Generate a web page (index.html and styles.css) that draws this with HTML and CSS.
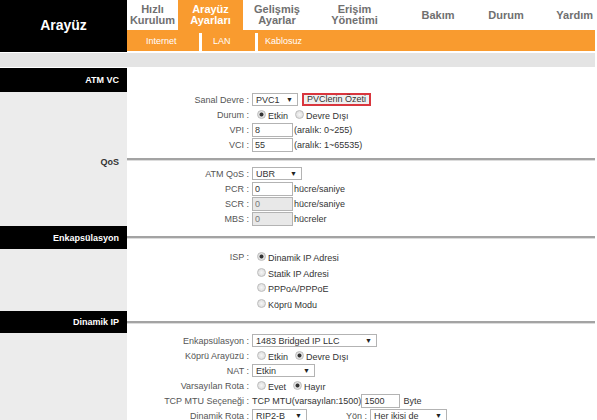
FILE: index.html
```html
<!DOCTYPE html>
<html lang="tr">
<head>
    <meta charset="UTF-8">
    <meta name="viewport" content="width=device-width, initial-scale=1.0">
    <title>Arayüz Ayarları</title>
    <link rel="stylesheet" href="styles.css">
</head>
<body>
    <div class="page">
        <div class="header">
            <div class="logo">Arayüz</div>
            <div class="nav">
                <div class="menu">
                    <div class="tab t1">Hızlı<br>Kurulum</div>
                    <div class="tab t2 active">Arayüz<br>Ayarları</div>
                    <div class="tab t3">Gelişmiş<br>Ayarlar</div>
                    <div class="tab t4">Erişim<br>Yönetimi</div>
                    <div class="tab t5">Bakım</div>
                    <div class="tab t6">Durum</div>
                    <div class="tab t7">Yardım</div>
                </div>
                <div class="submenu">
                    <span class="sub s1">Internet</span>
                    <span class="sub s2">LAN</span>
                    <span class="sub s3">Kablosuz</span>
                </div>
            </div>
        </div>
        <div class="strip"></div>

        <div class="content">
            <div class="sec-head first">
                <div class="sec-title">ATM VC</div>
            </div>
            <div class="row">
                <span class="lbl">Sanal Devre :</span>
                <span class="select w-pvc">PVC1 <i>▼</i></span>
                <span class="btn-red">PVClerin Özeti</span>
            </div>
            <div class="row">
                <span class="lbl">Durum :</span>
                <span class="radio on"></span><span class="opt">Etkin</span>
                <span class="radio"></span><span class="opt">Devre Dışı</span>
            </div>
            <div class="row">
                <span class="lbl">VPI :</span>
                <input class="box" type="text" value="8">
                <span class="note">(aralık: 0~255)</span>
            </div>
            <div class="row">
                <span class="lbl">VCI :</span>
                <input class="box" type="text" value="55">
                <span class="note">(aralık: 1~65535)</span>
            </div>
            <div class="sub-head">
                <div class="sub-title">QoS</div>
                <div class="sec-rule"></div>
            </div>
            <div class="row">
                <span class="lbl">ATM QoS :</span>
                <span class="select w-qos">UBR <i>▼</i></span>
            </div>
            <div class="row">
                <span class="lbl">PCR :</span>
                <input class="box" type="text" value="0">
                <span class="note">hücre/saniye</span>
            </div>
            <div class="row">
                <span class="lbl">SCR :</span>
                <input class="box" type="text" value="0" disabled>
                <span class="note">hücre/saniye</span>
            </div>
            <div class="row">
                <span class="lbl">MBS :</span>
                <input class="box" type="text" value="0" disabled>
                <span class="note">hücreler</span>
            </div>

            <div class="sec-head">
                <div class="sec-title">Enkapsülasyon</div>
                <div class="sec-rule"></div>
            </div>
            <div class="isp">
                <div class="row tall">
                    <span class="lbl">ISP :</span>
                    <span class="radio on"></span><span class="opt">Dinamik IP Adresi</span>
                </div>
                <div class="row tall">
                    <span class="lbl"></span>
                    <span class="radio"></span><span class="opt">Statik IP Adresi</span>
                </div>
                <div class="row tall">
                    <span class="lbl"></span>
                    <span class="radio"></span><span class="opt">PPPoA/PPPoE</span>
                </div>
                <div class="row tall">
                    <span class="lbl"></span>
                    <span class="radio"></span><span class="opt">Köprü Modu</span>
                </div>
            </div>

            <div class="sec-head short">
                <div class="sec-title">Dinamik IP</div>
                <div class="sec-rule"></div>
            </div>
            <div class="row">
                <span class="lbl">Enkapsülasyon :</span>
                <span class="select w-enc">1483 Bridged IP LLC <i>▼</i></span>
            </div>
            <div class="row">
                <span class="lbl">Köprü Arayüzü :</span>
                <span class="radio"></span><span class="opt">Etkin</span>
                <span class="radio on"></span><span class="opt">Devre Dışı</span>
            </div>
            <div class="row">
                <span class="lbl">NAT :</span>
                <span class="select w-nat">Etkin <i>▼</i></span>
            </div>
            <div class="row">
                <span class="lbl">Varsayılan Rota :</span>
                <span class="radio"></span><span class="opt">Evet</span>
                <span class="radio on"></span><span class="opt">Hayır</span>
            </div>
            <div class="row">
                <span class="lbl">TCP MTU Seçeneği :</span>
                <span class="text">TCP MTU(varsayılan:1500)</span>
                <input class="box w-mtu" type="text" value="1500">
                <span class="note byte">Byte</span>
            </div>
            <div class="row">
                <span class="lbl">Dinamik Rota :</span>
                <span class="select w-rip">RIP2-B <i>▼</i></span>
                <span class="yon">Yön :</span>
                <span class="select w-yon">Her ikisi de <i>▼</i></span>
            </div>
        </div>
    </div>
</body>
</html>
```

FILE: styles.css
```css
body {
    margin: 0;
    background-color: #fff;
    font-family: "Liberation Sans", Arial, sans-serif;
    font-size: 9px;
    color: #444;
}

.page {
    width: 595px;
}

/* header */

.header {
    display: flex;
    height: 52px;
}

.logo {
    width: 127px;
    background-color: #000;
    color: #fff;
    font-size: 14px;
    font-weight: bold;
    text-align: center;
    line-height: 50px;
}

.nav {
    flex: 1;
}

.menu {
    display: flex;
    height: 30px;
}

.tab {
    display: flex;
    align-items: center;
    justify-content: center;
    text-align: center;
    font-size: 11px;
    font-weight: bold;
    line-height: 11px;
    color: #707070;
}

.tab.active {
    background-color: #f99b2f;
    color: #fff;
}

.t1 { width: 51px; }
.t2 { width: 65px; }
.t3 { width: 68px; }
.t4 { width: 87px; }
.t5 { width: 80px; }
.t6 { width: 56px; }
.t7 { flex: 1; justify-content: flex-end; padding-right: 2px; }

.submenu {
    display: flex;
    height: 21px;
    background-color: #f99b2f;
}

.sub {
    margin-top: 3px;
    height: 18px;
    line-height: 17px;
    color: #fff;
    font-size: 9px;
    box-sizing: border-box;
}

.s1 { width: 72px; padding-left: 19px; }
.s2 { width: 56px; padding-left: 11px; border-left: 3px solid #fff; }
.s3 { padding-left: 7px; border-left: 3px solid #fff; }

.strip {
    height: 14px;
    margin-top: 1px;
    margin-bottom: 1px;
    background-color: #e4e4e4;
}

/* form area */

.content {
    background: linear-gradient(to right, #ececec 127px, #fff 127px);
    height: 353px;
    overflow: hidden;
}

.sec-head {
    display: flex;
    align-items: center;
    height: 23px;
}

.sec-head.first {
    height: 24px;
}

.sec-head.short {
    height: 22px;
}

.sec-title {
    width: 127px;
    height: 100%;
    box-sizing: border-box;
    padding-right: 8px;
    background-color: #000;
    color: #fff;
    font-weight: bold;
    text-align: right;
    display: flex;
    align-items: center;
    justify-content: flex-end;
}

.sec-rule {
    flex: 1;
    height: 2px;
    background-color: #a3a3a3;
    border-bottom: 1px solid #dcdcdc;
}

.sub-head {
    display: flex;
    height: 14px;
}

.sub-title {
    width: 127px;
    box-sizing: border-box;
    padding-right: 8px;
    padding-top: 5px;
    font-weight: bold;
    color: #333;
    text-align: right;
}

.sub-head .sec-rule {
    margin-top: 6px;
}

.row {
    display: flex;
    align-items: center;
    height: 15px;
    padding-left: 127px;
    white-space: nowrap;
}

.isp {
    height: 62px;
}

.row.tall {
    height: 15.5px;
}

.lbl {
    width: 122px;
    margin-right: 3px;
    text-align: right;
    color: #555;
}

.select {
    display: flex;
    justify-content: space-between;
    align-items: center;
    box-sizing: border-box;
    height: 13px;
    padding: 0 4px 0 3px;
    border: 1px solid #b3b3b3;
    background-color: #fff;
    color: #333;
}

.select i {
    font-style: normal;
    font-size: 7px;
    color: #222;
}

.w-pvc { width: 46px; }
.w-qos { width: 50px; }
.w-enc { width: 125px; }
.w-nat { width: 63px; }
.w-rip { width: 55px; }
.w-yon { width: 77px; }

.btn-red {
    margin-left: 4px;
    box-sizing: border-box;
    height: 13px;
    width: 69px;
    border: 2px solid #d9363e;
    background-color: #efefef;
    color: #333;
    text-align: center;
    line-height: 9px;
}

.box {
    box-sizing: border-box;
    width: 41px;
    height: 14px;
    margin: 0;
    padding: 0 2px;
    border: 1px solid #b3b3b3;
    font-family: "Liberation Sans", Arial, sans-serif;
    font-size: 9px;
    color: #333;
    background-color: #fff;
}

.box:disabled {
    background-color: #e8e8e8;
    color: #777;
}

.w-mtu { width: 39px; }

.note {
    margin-left: 1px;
    color: #333;
}

.byte {
    margin-left: 3px;
}

.text {
    color: #333;
}

.radio {
    box-sizing: border-box;
    width: 9px;
    height: 9px;
    margin: 0 2px 0 5px;
    border: 1px solid #bdbdbd;
    border-radius: 50%;
    background: radial-gradient(circle, #f6f6f6, #d6d6d6);
}

.radio.on {
    background: radial-gradient(circle, #333 0 1.6px, #e8e8e8 2.4px, #d0d0d0);
}

.opt {
    margin-top: 3px;
    margin-right: 2px;
    color: #333;
}

.yon {
    margin-left: 39px;
    margin-right: 3px;
    color: #555;
}
```
